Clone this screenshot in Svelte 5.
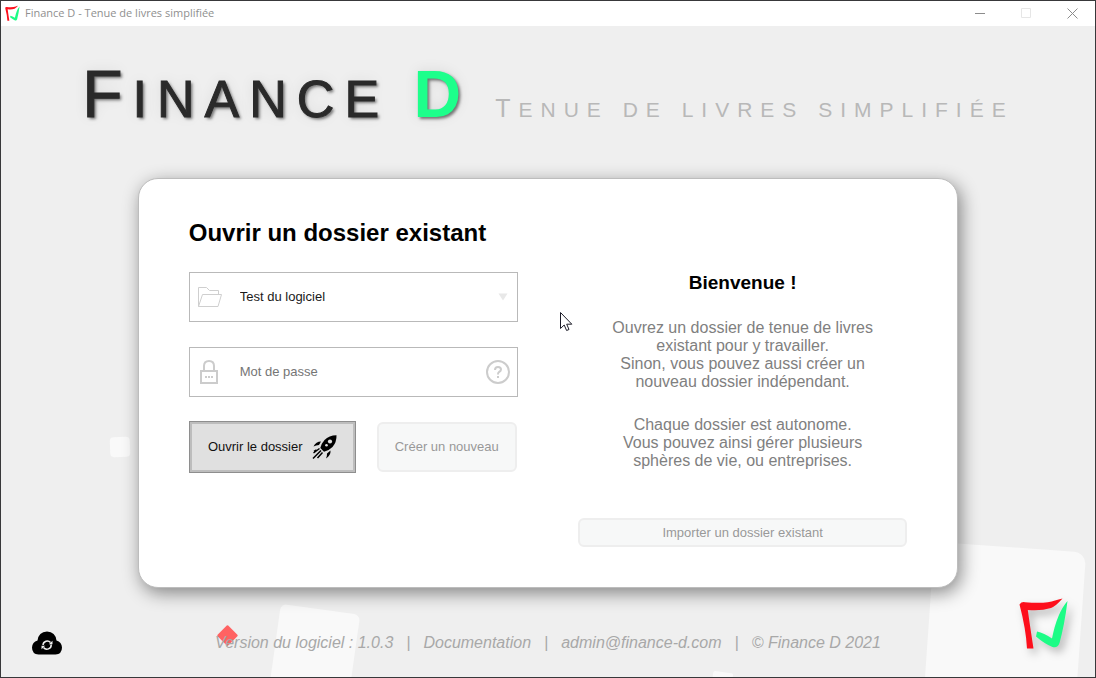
<script>
  const folders = ['Test du logiciel'];
  let folder = $state(folders[0]);
  let password = $state('');
</script>

{#snippet logo()}
  <svg class="logo" viewBox="0 0 50 52" aria-hidden="true">
    <path fill="#fd0f1c" d="M.5 5.500Q2.500 2.500 6 3.200Q27 5 36 1.500Q39.500 .5 43.500 -.5Q37 7 32 9Q22 12.200 8.800 11Q11 27 14.500 49.500H8Q7 30 .5 5.500Z" />
    <path fill="#1dfc86" d="M48.500 2Q45.500 26 40.500 44Q38.500 49.500 33.500 48Q25 44.500 17 37.500L18 32.500Q25 34 33 39.500Q38 14 48.500 2Z" />
  </svg>
{/snippet}

<div class="window">
  <div class="titlebar">
    <span class="mark">{@render logo()}</span>
    <span class="caption">Finance D - Tenue de livres simplifiée</span>
    <button class="winbtn" aria-label="Réduire">
      <svg width="11" height="11" viewBox="0 0 11 11"><path d="M0 5.500H10" stroke="#8c8c8c" /></svg>
    </button>
    <button class="winbtn" aria-label="Agrandir" disabled>
      <svg width="11" height="11" viewBox="0 0 11 11"><path d="M.5 .5H9.500V9.500H.5Z" fill="none" stroke="#e6e6e6" /></svg>
    </button>
    <button class="winbtn" aria-label="Fermer">
      <svg width="11" height="11" viewBox="0 0 11 11"><path d="M.5 .5L10.500 10.500M10.500 .5L.5 10.500" stroke="#8c8c8c" /></svg>
    </button>
  </div>

  <div class="stage">
    <div class="tile tile-a"></div>
    <div class="tile tile-b"></div>
    <div class="tile tile-c"></div>
    <div class="tile tile-d"></div>
    <div class="diamond"></div>

    <header>
      <h1><span class="cap">F</span>inance <b class="cap">D</b></h1>
      <p class="tagline"><span class="lead">T</span>enue de livres simplifiée</p>
    </header>

    <main>
      <form class="column" onsubmit={(e) => e.preventDefault()}>
        <h2>Ouvrir un dossier existant</h2>

        <label class="field">
          <svg width="26" height="26" viewBox="0 0 26 26" fill="none" stroke="#cfcfcf" aria-hidden="true">
            <path d="M1.500 22.500V3.500H9.500L12.500 6.500H21.500V10.500M1.500 22.500L5.500 10.500H24.500L21 22.500Z" />
          </svg>
          <select bind:value={folder} aria-label="Dossier">
            {#each folders as name}
              <option>{name}</option>
            {/each}
          </select>
          <svg class="arrow" width="10" height="8" viewBox="0 0 10 8" aria-hidden="true"><path d="M.5 .5H9.500L5 7.500Z" fill="#e8e8e8" /></svg>
        </label>

        <div class="field">
          <svg width="26" height="26" viewBox="0 0 26 26" fill="none" stroke="#cccccc" stroke-width="2" aria-hidden="true">
            <path d="M4 12H20V24H4ZM7 12V7Q7 2 12 2Q17 2 17 7V12" />
            <path d="M8 18H10M11 18H13M14 18H16" />
          </svg>
          <input type="password" placeholder="Mot de passe" aria-label="Mot de passe" bind:value={password} />
          <button type="button" class="help" aria-label="Aide">
            <svg width="24" height="24" viewBox="0 0 24 24" fill="none" stroke="#cccccc" stroke-width="2" aria-hidden="true">
              <circle cx="12" cy="12" r="11" />
              <path d="M9 10Q9 7 12 7Q15 7 15 9.500Q15 11 13 12Q12 12.700 12 14.500M12 16V18" />
            </svg>
          </button>
        </div>

        <div class="actions">
          <button type="submit" class="primary">
            <span>Ouvrir le dossier</span>
            <svg width="25" height="25" viewBox="0 0 25 25" aria-hidden="true">
              <path d="M24.500 .3Q17 .3 12.500 5Q9 9 8.300 13L12 16.800Q17 15.500 20.500 12Q24.800 7 24.500 .3Z" />
              <path d="M9 6.500Q4 6.500 1.500 11.500Q4 10 7 10ZM18.500 15.500Q19 20 14 23.500Q15.200 20.500 15 18.500Z" />
              <path d="M7.500 13.500L1.500 18M9 15.500L1 23.500M10.500 17.500L5.500 23M4.500 15L2 16.500" stroke="#000" stroke-width="1.500" />
              <circle cx="18" cy="6.500" r="2.100" fill="#e0e0e0" />
              <circle cx="14.500" cy="10.300" r="1.300" fill="#e0e0e0" />
            </svg>
          </button>
          <button type="button" class="soft">Créer un nouveau</button>
        </div>
      </form>

      <section class="column welcome">
        <h3>Bienvenue !</h3>
        <p>Ouvrez un dossier de tenue de livres<br />existant pour y travailler.<br />Sinon, vous pouvez aussi créer un<br />nouveau dossier indépendant.</p>
        <p>Chaque dossier est autonome.<br />Vous pouvez ainsi gérer plusieurs<br />sphères de vie, ou entreprises.</p>
        <button type="button" class="soft import">Importer un dossier existant</button>
      </section>
    </main>

    <footer>
      <button class="sync" aria-label="Synchroniser">
        <svg width="30" height="24" viewBox="0 0 30 24" aria-hidden="true">
          <path d="M6.500 23.500Q0 23 0 16.500Q.3 11 5.500 9.500Q6.500 1 15 .5Q23.500 1 24.500 9.500Q29.700 11 30 16.500Q30 23 23.500 23.500Z" />
          <path d="M11 14A4.300 4.300 0 0 1 18.500 11.500M19.200 13.500A4.300 4.300 0 0 1 11.500 16.500" fill="none" stroke="#efefef" stroke-width="1.500" />
          <path d="M16.800 13.200H20.500V9.800ZM13.200 14.800H9.500V18.200Z" fill="#efefef" />
        </svg>
      </button>
      <div class="info">
        <span>Version du logiciel : 1.0.3</span><span>|</span><a href="#documentation">Documentation</a><span>|</span><a href="mailto:admin@finance-d.com">admin@finance-d.com</a><span>|</span><span>© Finance D 2021</span>
      </div>
      <div class="brand">{@render logo()}</div>
    </footer>
  </div>

  <svg class="pointer" width="13" height="20" viewBox="0 0 13 20" aria-hidden="true">
    <path d="M.5 .5V16.500L4.200 13L6.600 18.500L9 17.500L6.700 12.200H11.800Z" fill="#fff" stroke="#1c1c28" />
  </svg>
</div>

<style>
  :global(body) {
    margin: 0;
  }
  .window {
    box-sizing: border-box;
    position: relative;
    min-height: 100vh;
    display: flex;
    flex-direction: column;
    border: 1px solid #38383a;
    background: #efefef;
    font-family: 'Liberation Sans', Arial, sans-serif;
  }
  h1, h2, h3, p {
    margin: 0;
  }
  button, select, input {
    font-family: inherit;
    font-size: 13px;
  }
  .titlebar {
    display: flex;
    align-items: center;
    height: 25px;
    padding-left: 4px;
    background: #fff;
  }
  .logo {
    display: block;
    width: 100%;
    overflow: visible;
  }
  .mark {
    width: 15px;
    margin-right: 5px;
  }
  .caption {
    flex: 1;
    padding-bottom: 2px;
    font-family: 'Open Sans', sans-serif;
    font-size: 11px;
    color: #8f8f8f;
  }
  .winbtn {
    display: grid;
    place-items: center;
    width: 46px;
    height: 25px;
    padding: 0;
    border: 0;
    background: none;
  }
  .stage {
    position: relative;
    flex: 1;
    display: flex;
    flex-direction: column;
    overflow: hidden;
  }
  .tile, .diamond {
    position: absolute;
    background: #f9f9f9;
    border-radius: 4px;
    width: 20px;
    height: 20px;
  }
  .tile-a {
    right: 14px;
    bottom: -22px;
    width: 152px;
    height: 152px;
    border-radius: 12px;
    transform: rotate(4deg);
  }
  .tile-b {
    left: 25%;
    bottom: -12px;
    width: 80px;
    height: 80px;
    border-radius: 6px;
    transform: rotate(8deg);
  }
  .tile-c {
    left: 65%;
    bottom: -15px;
    border-radius: 2px;
    transform: rotate(8deg);
  }
  .tile-d {
    left: 10%;
    bottom: 220px;
    transform: rotate(-2deg);
  }
  .diamond {
    left: 20%;
    bottom: 34px;
    width: 15px;
    height: 15px;
    border-radius: 1px;
    background: #ff6262;
    transform: rotate(45deg);
  }
  header {
    display: flex;
    justify-content: center;
    align-items: baseline;
    gap: 24px;
    height: 152px;
    padding-top: 32px;
    box-sizing: border-box;
  }
  h1 {
    font-size: 52px;
    line-height: 72px;
    font-weight: 400;
    letter-spacing: 10px;
    text-transform: uppercase;
    color: #2a2a2a;
    -webkit-text-stroke: 1px #2a2a2a;
    text-shadow: 2px 2px 3px rgba(0, 0, 0, 0.5), 0 0 14px rgba(0, 0, 0, 0.1);
  }
  .cap {
    font-size: 66px;
  }
  b {
    color: #1dff8b;
    -webkit-text-stroke: 0;
  }
  .tagline {
    font-size: 21px;
    text-transform: uppercase;
    letter-spacing: 8px;
    color: #b8b8b8;
  }
  .lead {
    font-size: 25px;
  }
  main {
    position: relative;
    display: grid;
    grid-template-columns: 1fr 1fr;
    gap: 60px;
    box-sizing: border-box;
    width: 75%;
    min-height: 410px;
    margin: 0 auto;
    padding: 40px 50px;
    border: 1px solid #bdbdbd;
    border-radius: 20px;
    background: #fff;
    box-shadow: 3px 5px 18px rgba(0, 0, 0, 0.45);
  }
  .column {
    display: flex;
    flex-direction: column;
  }
  form.column {
    gap: 25px;
  }
  h2 {
    font-size: 24px;
    line-height: 28px;
    color: #000;
  }
  .field {
    display: flex;
    align-items: center;
    box-sizing: border-box;
    height: 50px;
    padding: 0 7px;
    border: 1px solid #b9b9b9;
    background: #fff;
  }
  select, input {
    appearance: none;
    flex: 1;
    box-sizing: border-box;
    min-width: 0;
    height: 40px;
    margin: 0 0 0 17px;
    padding: 0 0 2px;
    border: 0;
    outline: 0;
    background: none;
    color: #1a1a1a;
  }
  input::placeholder {
    color: #757575;
  }
  .arrow {
    margin-right: 2px;
  }
  .help {
    padding: 0;
    border: 0;
    background: none;
    line-height: 0;
  }
  .actions {
    display: flex;
    align-items: center;
    gap: 21px;
    height: 50px;
  }
  .primary {
    display: flex;
    align-items: center;
    justify-content: center;
    gap: 9px;
    box-sizing: border-box;
    width: 167px;
    height: 52px;
    padding: 0;
    border: 1px solid #8e8e8e;
    background: #e0e0e0;
    box-shadow: inset 0 0 0 2px #bdbdbd;
    color: #111;
  }
  .primary span {
    padding-bottom: 2px;
  }
  .soft {
    box-sizing: border-box;
    width: 140px;
    height: 50px;
    padding: 0 0 2px;
    border: 2px solid #eeeeee;
    border-radius: 6px;
    background: #f7f8f8;
    color: #999;
  }
  .welcome {
    padding-top: 52px;
    text-align: center;
  }
  h3 {
    font-size: 19px;
    line-height: 24px;
    margin-bottom: 24px;
    color: #000;
  }
  .welcome p {
    margin-bottom: 25px;
    font-size: 16px;
    line-height: 18px;
    color: #808080;
  }
  .soft.import {
    width: 100%;
    height: 29px;
    margin-top: auto;
    padding: 0;
  }
  footer {
    position: relative;
    flex: 1;
    display: grid;
    grid-template-columns: 76px 1fr 76px;
    align-items: center;
  }
  .sync {
    padding: 0 0 0 31px;
    border: 0;
    background: none;
    line-height: 0;
    text-align: left;
    margin-top: 20px;
  }
  .info {
    display: flex;
    justify-content: center;
    gap: 13px;
    margin-top: 20px;
    font-size: 16px;
    font-style: italic;
    color: #a8a8a8;
  }
  .info a {
    color: inherit;
    text-decoration: none;
  }
  .brand {
    width: 50px;
    margin-bottom: 16px;
    filter: drop-shadow(4px 5px 4px rgba(0, 0, 0, 0.25));
  }
  .pointer {
    position: absolute;
    left: 559px;
    top: 311px;
  }
</style>
